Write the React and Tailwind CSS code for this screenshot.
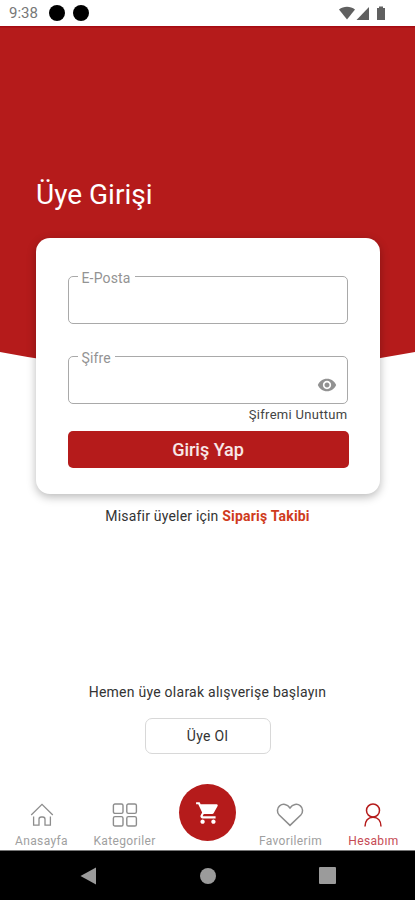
import React, { useState } from "react";
import { MdRemoveRedEye, MdShoppingCart } from "react-icons/md";

const HomeIcon = () => (
  <svg width="24" height="24" viewBox="0 0 24 24" fill="none" stroke="currentColor" strokeWidth="1.3">
    <path d="M1.2 12 12 1.4 22.8 12" />
    <path d="M3.6 13.5v8.7H9v-6a2.2 2.2 0 0 1 2.2-2.2h1.6a2.2 2.2 0 0 1 2.2 2.2v6h5.4v-8.7" />
  </svg>
);

const GridIcon = () => (
  <svg width="26" height="24" viewBox="0 0 26 24" fill="none" stroke="currentColor" strokeWidth="1.4">
    <rect x="1.4" y="1" width="9.6" height="9.4" rx="1.6" />
    <rect x="14.8" y="1" width="9.6" height="9.4" rx="1.6" />
    <rect x="1.4" y="13.6" width="9.6" height="9.4" rx="1.6" />
    <rect x="14.8" y="13.6" width="9.6" height="9.4" rx="1.6" />
  </svg>
);

const HeartIcon = () => (
  <svg width="28" height="24" viewBox="0 0 28 24" fill="none" stroke="currentColor" strokeWidth="1.5">
    <path d="M14 22.4 3.2 12C.7 9.400.9 5 3.600 2.800 6.800.2 11.300 1 14 5c2.700-4 7.200-4.800 10.400-2.200C27.100 5 27.300 9.400 24.800 12Z" />
  </svg>
);

const UserIcon = () => (
  <svg width="20" height="24" viewBox="0 0 20 24" fill="none" stroke="currentColor" strokeWidth="1.5">
    <circle cx="10" cy="7.500" r="6.500" />
    <path d="M2 23.500c0-5.500 3-9.300 8-9.300s8 3.800 8 9.300" />
  </svg>
);

const Field = ({ label, type, children }) => (
  <fieldset className="flex h-[58px] min-w-0 rounded-[5px] border border-[#a9a9a9] pl-[9px] pr-[10px]">
    <legend className="h-5 px-1 pt-[3px] text-[14px] leading-[18px] tracking-[0.15px] text-[#939393]">{label}</legend>
    <div className="flex h-[37px] w-full items-center">
      <input type={type} aria-label={label} className="h-full w-full min-w-0 outline-none" />
      {children}
    </div>
  </fieldset>
);

const NavItem = ({ icon, label, active }) => (
  <button className={active ? "flex flex-col items-center text-[#b51b1b]" : "flex flex-col items-center text-[#8d8d8d]"}>
    <span className="h-6">{icon}</span>
    <span className={active ? "mt-[6px] text-[12px] leading-4 tracking-[0.35px] text-[#c64b54]" : "mt-[6px] text-[12px] leading-4 tracking-[0.35px] text-[#a0a0a0]"}>{label}</span>
  </button>
);

const App = () => {
  const [showPassword, setShowPassword] = useState(false);

  return (
    <div className="flex h-[900px] w-[415px] flex-col overflow-hidden bg-white font-[Roboto,sans-serif]">
      <header className="flex h-[26px] shrink-0 items-center pl-[9px] pr-[29px] text-[#777]">
        <span className="w-[40px] text-[15px] leading-[26px]">9:38</span>
        <span className="size-4 rounded-full bg-black" />
        <span className="ml-2 size-4 rounded-full bg-black" />
        <svg className="ml-auto" width="47" height="16" viewBox="0 0 47 16" fill="#606060">
          <path d="M0 4.500C4.500.7 11.500.7 16 4.500L8 14.500Z" />
          <path d="M30 2v13H17.500Z" />
          <path d="M38 3h2V1.500h4V3h2v12h-8Z" />
        </svg>
      </header>

      <main className="grid h-[754px] shrink-0 grid-cols-1">
        <svg className="col-start-1 row-start-1" width="415" height="360" viewBox="0 0 415 360" fill="#b51b1b">
          <path d="M0 0H415V326Q207.500 366 0 326Z" />
          <path d="M0 0H415V1.500H0Z" fill="#a50b12" />
        </svg>

        <div className="col-start-1 row-start-1 flex flex-col items-center">
          <h1 className="mt-[151px] w-[343px] text-[28px] leading-9 text-white">Üye Girişi</h1>

          <form
            onSubmit={(e) => e.preventDefault()}
            className="mt-[25px] flex h-[256px] w-[344px] flex-col rounded-[14px] bg-white px-8 pt-[28px] shadow-[0_3px_10px_rgba(0,0,0,0.28)]"
          >
            <Field label="E-Posta" type="email" />
            <div className="mt-[22px]">
              <Field label="Şifre" type={showPassword ? "text" : "password"}>
                <button type="button" aria-label="Şifreyi göster" onClick={() => setShowPassword(!showPassword)}>
                  <MdRemoveRedEye size={20} color="#929292" />
                </button>
              </Field>
            </div>
            <a href="#" className="mt-[2px] self-end text-[13px] leading-[18px] tracking-[0.3px] text-[#444]">Şifremi Unuttum</a>
            <button className="mt-[7px] h-[37px] w-[281px] shrink-0 rounded-[5px] bg-[#b51b1b] text-[18px] font-medium text-white/90">
              Giriş Yap
            </button>
          </form>

          <p className="mt-[12px] text-[14px] leading-5 tracking-[0.2px] text-[#333]">
            Misafir üyeler için <a href="#" className="font-bold text-[#cf3b1c]">Sipariş Takibi</a>
          </p>

          <p className="mt-[156px] text-[14px] leading-5 tracking-[0.25px] text-[#333]">Hemen üye olarak alışverişe başlayın</p>
          <button className="mt-[16px] h-[36px] w-[126px] rounded-[7px] border border-[#d8d8d8] text-[14px] tracking-[0.3px] text-[#333]">
            Üye Ol
          </button>
        </div>
      </main>

      <nav className="grid h-[70px] shrink-0 grid-cols-5 items-start pt-[4px]">
        <div className="pt-[19px] flex justify-center"><NavItem icon={<HomeIcon />} label="Anasayfa" /></div>
        <div className="pt-[19px] flex justify-center"><NavItem icon={<GridIcon />} label="Kategoriler" /></div>
        <button aria-label="Sepet" className="flex size-[57px] items-center justify-center justify-self-center rounded-full bg-[#b51b1b]">
          <MdShoppingCart size={26} color="#fff" />
        </button>
        <div className="pt-[19px] flex justify-center"><NavItem icon={<HeartIcon />} label="Favorilerim" /></div>
        <div className="pt-[19px] flex justify-center"><NavItem icon={<UserIcon />} label="Hesabım" active /></div>
      </nav>

      <footer className="flex h-[50px] shrink-0 items-center justify-center gap-[103px] border-t border-[#777] bg-black">
        <svg width="17" height="18" viewBox="0 0 17 18" fill="#9b9b9b">
          <path d="M16 .5v17L.5 9Z" />
        </svg>
        <span className="size-4 rounded-full bg-[#9b9b9b]" />
        <span className="size-[17px] rounded-[1px] bg-[#9b9b9b]" />
      </footer>
    </div>
  );
};

export default App;
